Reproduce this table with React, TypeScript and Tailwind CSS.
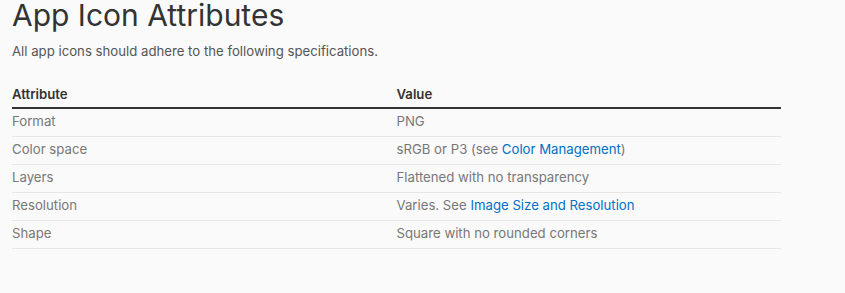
const rows: { attr: string; value: React.ReactNode }[] = [
  { attr: "Format", value: "PNG" },
  {
    attr: "Color space",
    value: (
      <>
        sRGB or P3 (see <a className="text-[#0070c9]" href="#">Color Management</a>)
      </>
    ),
  },
  { attr: "Layers", value: "Flattened with no transparency" },
  {
    attr: "Resolution",
    value: (
      <>
        Varies. See <a className="text-[#0070c9]" href="#">Image Size and Resolution</a>
      </>
    ),
  },
  { attr: "Shape", value: "Square with no rounded corners" },
];

export default function App() {
  return (
    <div className="h-[293px] w-[845px] overflow-hidden bg-[#fafafa] font-['Inter',sans-serif]">
      <div className="w-[769px] pl-3 box-content">
        <h1 className="text-[30px] leading-[30px] font-normal text-[#333]">
          App Icon Attributes
        </h1>
        <p className="mt-[12px] text-[13.2px] leading-[18px] text-[#555]">
          All app icons should adhere to the following specifications.
        </p>
        <table className="mt-[25px] w-full table-fixed border-collapse text-[13.2px]">
          <thead>
            <tr className="border-b-2 border-[#333]">
              <th className="w-1/2 p-0 pb-[4px] text-left font-semibold text-[#333] leading-[18px]">Attribute</th>
              <th className="w-1/2 p-0 pb-[4px] text-left font-semibold text-[#333] leading-[18px]">Value</th>
            </tr>
          </thead>
          <tbody>
            {rows.map((r) => (
              <tr key={r.attr} className="border-b border-[#e6e6e6]">
                <td className="h-[28px] p-0 align-middle text-[#777]">{r.attr}</td>
                <td className="h-[28px] p-0 align-middle text-[#777]">{r.value}</td>
              </tr>
            ))}
          </tbody>
        </table>
      </div>
    </div>
  );
}
